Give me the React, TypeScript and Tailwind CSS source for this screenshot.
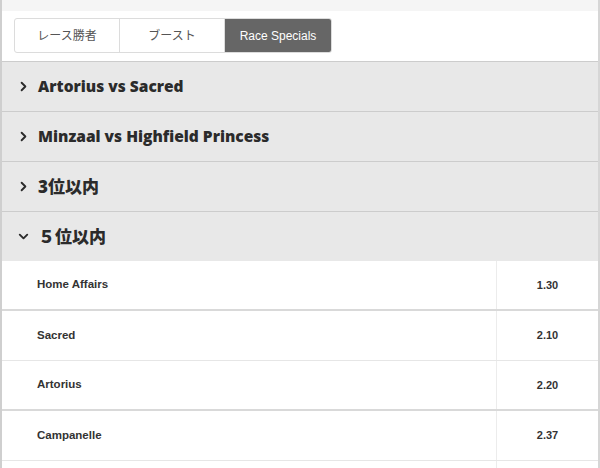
import { ChevronDown, ChevronRight } from "lucide-react";

const tabs = ["レース勝者", "ブースト", "Race Specials"];

const markets = [
  { label: "Artorius vs Sacred", jp: false },
  { label: "Minzaal vs Highfield Princess", jp: false },
  { label: "3位以内", jp: true },
];

const runners = [
  { name: "Home Affairs", price: "1.30" },
  { name: "Sacred", price: "2.10" },
  { name: "Artorius", price: "2.20" },
  { name: "Campanelle", price: "2.37" },
];

const headerCls =
  "flex h-[50px] items-center gap-[7px] border-t border-[#cccccc] bg-[#e8e8e8] pl-[14px] font-['Open_Sans','Noto_Sans_CJK_JP',sans-serif] text-[15.5px] font-extrabold text-[#2b2b2b]";

export default function App() {
  return (
    <div className="h-[468px] w-[600px] overflow-hidden border-x-2 border-l-[#cfcfcf] border-r-[#d6d6d6] bg-white font-['Liberation_Sans','Noto_Sans_CJK_JP',sans-serif]">
      <div className="h-[11px] bg-[#f5f5f5]" />
      <div className="flex h-[50px] items-start px-3 pt-[7px]">
        <div className="flex h-[35px] overflow-hidden rounded-[3px] border border-[#dcdcdc]">
          {tabs.map((t, i) => (
            <div
              key={t}
              className={
                i === 2
                  ? "flex w-[106px] items-center justify-center bg-[#666666] text-[12px] text-white"
                  : "flex w-[105px] items-center justify-center border-r border-[#dcdcdc] text-[12px] text-[#555]"
              }
            >
              {t}
            </div>
          ))}
        </div>
      </div>

      {markets.map((m) => (
        <div key={m.label} className={headerCls}>
          <ChevronRight size={15} strokeWidth={3} className="text-[#2b2b2b]" />
          <span className={m.jp ? "text-[17px]" : ""}>{m.label}</span>
        </div>
      ))}
      <div className={headerCls}>
        <ChevronDown size={15} strokeWidth={3} className="text-[#2b2b2b]" />
        <span className="text-[17px]">５位以内</span>
      </div>

      {runners.map((r, i) => (
        <div
          key={r.name}
          className={
            i % 2 === 0
              ? "flex h-[50px] border-b-2 border-[#d9d9d9]"
              : "flex h-[50px] border-b border-[#e6e6e6]"
          }
        >
          <div className="flex flex-1 items-center pl-[35px] text-[11.5px] font-bold text-[#333]">
            {r.name}
          </div>
          <div className="flex w-[102px] items-center justify-center border-l border-[#ececec] text-[11px] font-bold text-[#333]">
            {r.price}
          </div>
        </div>
      ))}
      <div className="flex h-[50px]">
        <div className="flex-1" />
        <div className="w-[102px] border-l border-[#ececec]" />
      </div>
    </div>
  );
}
